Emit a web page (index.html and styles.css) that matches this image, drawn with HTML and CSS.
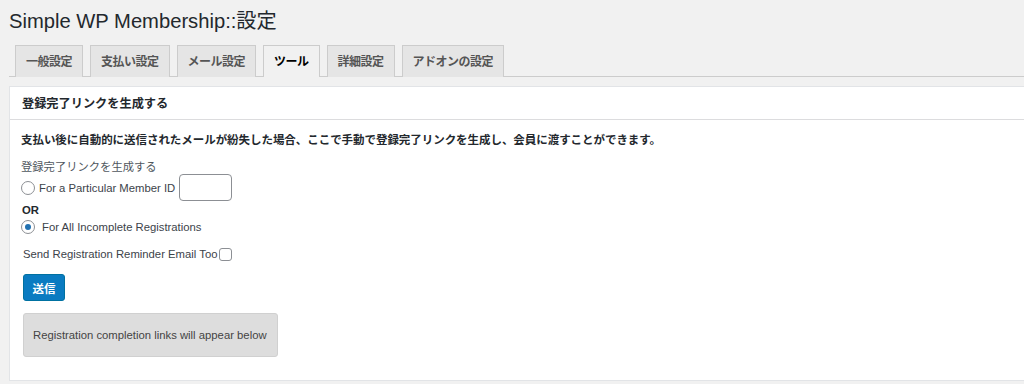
FILE: index.html
```html
<!DOCTYPE html>
<html lang="ja">
<head>
<meta charset="utf-8">
<title>Simple WP Membership::設定</title>
<link rel="stylesheet" href="styles.css">
</head>
<body>
<div class="wrap">
  <h1 class="page-title">Simple WP Membership::設定</h1>
  <nav class="tabs">
    <a class="tab">一般設定</a>
    <a class="tab">支払い設定</a>
    <a class="tab">メール設定</a>
    <a class="tab active">ツール</a>
    <a class="tab">詳細設定</a>
    <a class="tab">アドオンの設定</a>
  </nav>
  <section class="postbox">
    <h3 class="postbox-title">登録完了リンクを生成する</h3>
    <div class="inside">
      <p class="desc">支払い後に自動的に送信されたメールが紛失した場合、ここで手動で登録完了リンクを生成し、会員に渡すことができます。</p>
      <div class="label">登録完了リンクを生成する</div>
      <label class="row radio-row">
        <span class="radio"></span>
        <span class="rtext">For a Particular Member ID</span>
        <span class="textbox"></span>
      </label>
      <div class="or">OR</div>
      <label class="row radio-row2">
        <span class="radio checked"></span>
        <span class="rtext2">For All Incomplete Registrations</span>
      </label>
      <label class="row send-row">
        <span>Send Registration Reminder Email Too</span>
        <span class="checkbox"></span>
      </label>
      <button class="btn">送信</button>
      <div class="result">Registration completion links will appear below</div>
    </div>
  </section>
</div>
</body>
</html>
```

FILE: styles.css
```css
html, body {
  margin: 0;
  padding: 0;
  background: #f1f1f1;
  height: 100%;
  overflow: hidden;
}
body {
  font-family: "Liberation Sans", "Noto Sans CJK JP", sans-serif;
  color: #3c434a;
}
.wrap {
  padding-left: 9px;
}
.page-title {
  margin: 0;
  padding-top: 7px;
  height: 45px;
  box-sizing: border-box;
  font-size: 20.2px;
  font-weight: 400;
  line-height: 28px;
  color: #23282d;
}
.tabs {
  display: flex;
  gap: 7px;
  padding-left: 6px;
  border-bottom: 1px solid #cccccc;
  height: 31px;
  box-sizing: content-box;
}
.tab {
  display: block;
  box-sizing: border-box;
  height: 32px;
  padding: 0 10px;
  border: 1px solid #cccccc;
  border-bottom: none;
  background: #e5e5e5;
  color: #555555;
  font-size: 12px;
  font-weight: 700;
  line-height: 30px;
  font-family: "Noto Sans CJK JP", sans-serif;
  letter-spacing: -0.5px;
}
.tab.active {
  background: #f1f1f1;
  color: #000000;
  height: 32px;
  position: relative;
  z-index: 1;
}
.postbox {
  margin-top: 9px;
  margin-right: -20px;
  background: #ffffff;
  border: 1px solid #e2e4e7;
  height: 295px;
  box-sizing: border-box;
}
.postbox-title {
  margin: 0;
  height: 33px;
  box-sizing: border-box;
  padding: 0 12px;
  border-bottom: 1px solid #dcdcde;
  font-size: 12.2px;
  font-weight: 700;
  line-height: 32px;
  color: #23282d;
  font-family: "Noto Sans CJK JP", sans-serif;
}
.inside {
  padding: 0 12px 0 11px;
  font-size: 11.3px;
  color: #3c434a;
}
.desc {
  margin: 9px 0 0;
  height: 20px;
  line-height: 20px;
  font-weight: 700;
  font-size: 11.5px;
  color: #23282d;
  font-family: "Noto Sans CJK JP", sans-serif;
  white-space: nowrap;
  letter-spacing: -0.05px;
}
.label {
  margin-top: 8px;
  height: 19px;
  line-height: 19px;
  color: #50575e;
  font-family: "Noto Sans CJK JP", sans-serif;
  font-size: 11.3px;
}
.row {
  display: flex;
  align-items: center;
}
.radio-row {
  height: 27px;
  margin-top: -2px;
}
.radio {
  width: 14px;
  height: 14px;
  box-sizing: border-box;
  border: 1px solid #8c8f94;
  border-radius: 50%;
  background: #fff;
  position: relative;
  flex: none;
}
.radio.checked::after {
  content: "";
  position: absolute;
  left: 3px;
  top: 3px;
  width: 6px;
  height: 6px;
  border-radius: 50%;
  background: #2271b1;
}
.rtext {
  margin-left: 4px;
}
.rtext2 {
  margin-left: 7px;
}
.textbox {
  width: 53px;
  height: 27px;
  box-sizing: border-box;
  border: 1px solid #8c8f94;
  border-radius: 4px;
  margin-left: 4px;
  background: #fff;
}
.or {
  height: 16px;
  line-height: 16px;
  margin-top: 1px;
  font-weight: 700;
  color: #23282d;
  padding-left: 1px;
}
.radio-row2 {
  height: 18px;
}
.send-row {
  margin-top: 9px;
  padding-left: 2px;
  height: 18px;
}
.checkbox {
  width: 13px;
  height: 13px;
  box-sizing: border-box;
  border: 1px solid #8c8f94;
  border-radius: 3px;
  margin-left: 2px;
  background: #fff;
}
.btn {
  display: block;
  margin: 11px 0 0 2px;
  width: 42px;
  height: 27px;
  padding: 0;
  border: 1px solid #0071a1;
  border-radius: 3px;
  background: #0a7bc1;
  color: #ffffff;
  font-family: "Noto Sans CJK JP", sans-serif;
  font-size: 11.5px;
  font-weight: 700;
}
.result {
  margin: 12px 0 0 2px;
  width: 255px;
  height: 44px;
  box-sizing: border-box;
  background: #dddddd;
  border: 1px solid #d0d0d0;
  border-radius: 3px;
  font-size: 11.3px;
  line-height: 42px;
  color: #444444;
  padding-left: 9px;
}
```
